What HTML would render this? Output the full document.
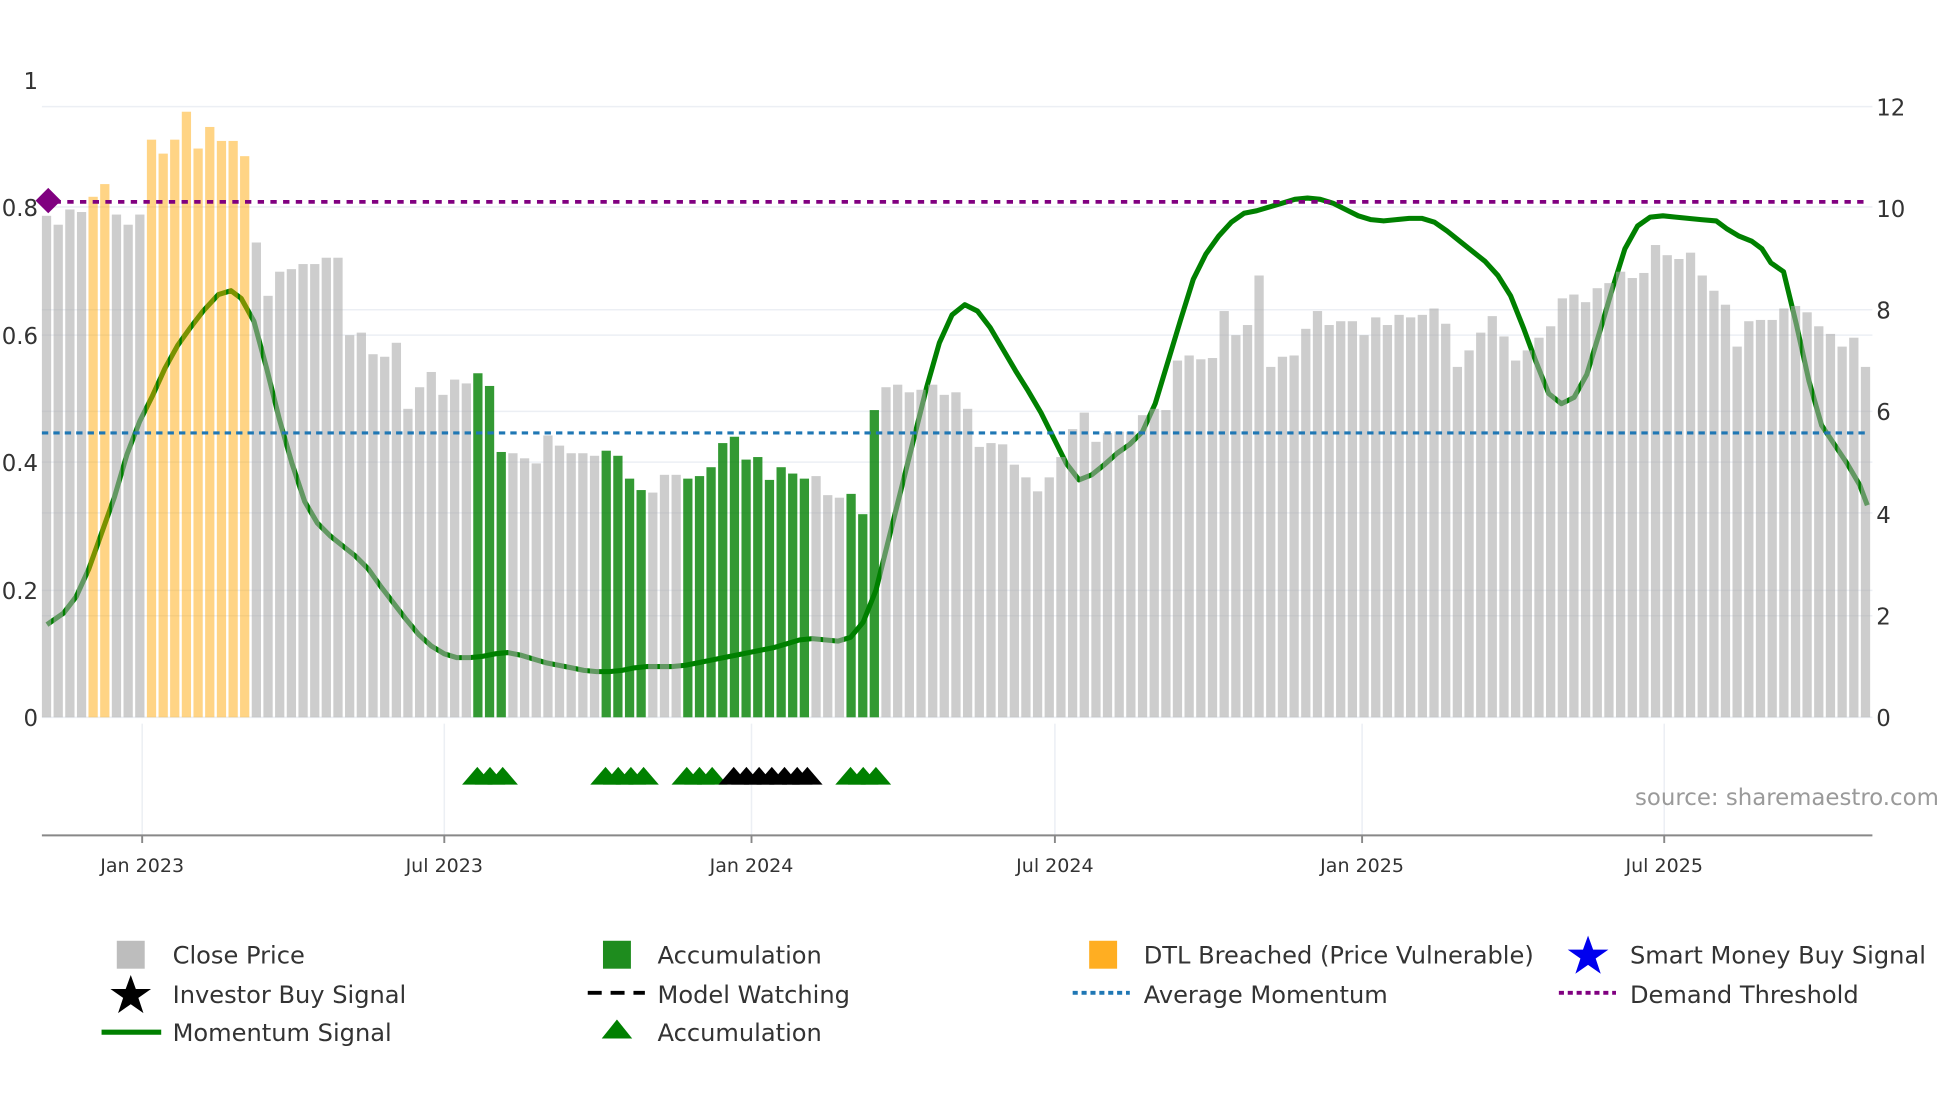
<!DOCTYPE html>
<html><head><meta charset="utf-8"><style>
html,body{margin:0;padding:0;background:#fff;width:1960px;height:1102px;overflow:hidden}
svg{display:block}
text{font-family:"DejaVu Sans","Liberation Sans",sans-serif;fill:#333}
.g{fill:#a8a8a8;fill-opacity:.58}
.o{fill:#ffa500;fill-opacity:.48}
.a{fill:#008000;fill-opacity:.8}
</style></head><body>
<svg width="1960" height="1102" viewBox="0 0 1544 868" preserveAspectRatio="none" xmlns="http://www.w3.org/2000/svg">
<g stroke="#eceff4" stroke-width="1.2">
<line x1="33" y1="84" x2="1475" y2="84"/><line x1="33" y1="163" x2="1475" y2="163"/>
<line x1="33" y1="244" x2="1475" y2="244"/><line x1="33" y1="264" x2="1475" y2="264"/>
<line x1="33" y1="324" x2="1475" y2="324"/><line x1="33" y1="364" x2="1475" y2="364"/>
<line x1="33" y1="404" x2="1475" y2="404"/><line x1="33" y1="465" x2="1475" y2="465"/>
<line x1="33" y1="485" x2="1475" y2="485"/><line x1="33" y1="565" x2="1475" y2="565"/>
<line x1="112" y1="570" x2="112" y2="658"/><line x1="350" y1="570" x2="350" y2="658"/>
<line x1="592" y1="570" x2="592" y2="658"/><line x1="831" y1="570" x2="831" y2="658"/>
<line x1="1073" y1="570" x2="1073" y2="658"/><line x1="1311" y1="570" x2="1311" y2="658"/>
</g>
<polyline fill="none" stroke="#008000" stroke-width="4" stroke-linejoin="round" points="37,492 50,483 60,470 70,448 80,420 90,392 100,358 110,332 120,312 130,290 140,272 150,258 160,245 172,232 182,229 190,235 200,253 210,290 220,330 230,365 240,395 250,412 260,422 270,430 280,438 290,448 300,462 310,475 320,488 330,500 340,509 350,515 360,518 370,518 380,517 390,515 400,514 410,516 420,519 430,522 440,524 450,526 460,528 470,529 480,529 490,528 500,526 510,525 520,525 530,525 540,524 550,522 560,520 570,518 580,516 590,514 600,512 610,510 620,507 630,504 640,503 650,504 660,505 670,502 680,490 690,465 700,425 710,385 720,345 730,305 740,270 750,248 760,240 770,245 780,258 790,275 800,292 810,308 820,325 830,345 840,365 850,378 860,374 870,366 880,357 890,350 900,340 910,318 920,285 930,252 940,220 950,200 960,186 970,175 980,168 990,166 1000,163 1010,160 1020,157 1030,156 1040,157 1050,160 1060,165 1070,170 1080,173 1090,174 1100,173 1110,172 1120,172 1130,175 1140,182 1150,190 1160,198 1170,206 1180,217 1190,233 1200,258 1210,285 1220,310 1230,318 1240,313 1250,295 1260,262 1270,228 1280,196 1290,178 1300,171 1310,170 1320,171 1330,172 1340,173 1352,174 1360,180 1370,186 1380,190 1388,196 1395,207 1405,214 1415,255 1425,300 1435,335 1445,350 1455,365 1465,382 1471,398"/>
<g>
<rect class="g" x="33.0" y="170" width="7.3" height="395"/>
<rect class="g" x="42.2" y="177" width="7.3" height="388"/>
<rect class="g" x="51.4" y="165" width="7.3" height="400"/>
<rect class="g" x="60.6" y="167" width="7.3" height="398"/>
<rect class="o" x="69.7" y="155" width="7.3" height="410"/>
<rect class="o" x="78.9" y="145" width="7.3" height="420"/>
<rect class="g" x="88.1" y="169" width="7.3" height="396"/>
<rect class="g" x="97.3" y="177" width="7.3" height="388"/>
<rect class="g" x="106.5" y="169" width="7.3" height="396"/>
<rect class="o" x="115.7" y="110" width="7.3" height="455"/>
<rect class="o" x="124.9" y="121" width="7.3" height="444"/>
<rect class="o" x="134.0" y="110" width="7.3" height="455"/>
<rect class="o" x="143.2" y="88" width="7.3" height="477"/>
<rect class="o" x="152.4" y="117" width="7.3" height="448"/>
<rect class="o" x="161.6" y="100" width="7.3" height="465"/>
<rect class="o" x="170.8" y="111" width="7.3" height="454"/>
<rect class="o" x="180.0" y="111" width="7.3" height="454"/>
<rect class="o" x="189.1" y="123" width="7.3" height="442"/>
<rect class="g" x="198.3" y="191" width="7.3" height="374"/>
<rect class="g" x="207.5" y="233" width="7.3" height="332"/>
<rect class="g" x="216.7" y="214" width="7.3" height="351"/>
<rect class="g" x="225.9" y="212" width="7.3" height="353"/>
<rect class="g" x="235.1" y="208" width="7.3" height="357"/>
<rect class="g" x="244.3" y="208" width="7.3" height="357"/>
<rect class="g" x="253.4" y="203" width="7.3" height="362"/>
<rect class="g" x="262.6" y="203" width="7.3" height="362"/>
<rect class="g" x="271.8" y="264" width="7.3" height="301"/>
<rect class="g" x="281.0" y="262" width="7.3" height="303"/>
<rect class="g" x="290.2" y="279" width="7.3" height="286"/>
<rect class="g" x="299.4" y="281" width="7.3" height="284"/>
<rect class="g" x="308.6" y="270" width="7.3" height="295"/>
<rect class="g" x="317.7" y="322" width="7.3" height="243"/>
<rect class="g" x="326.9" y="305" width="7.3" height="260"/>
<rect class="g" x="336.1" y="293" width="7.3" height="272"/>
<rect class="g" x="345.3" y="311" width="7.3" height="254"/>
<rect class="g" x="354.5" y="299" width="7.3" height="266"/>
<rect class="g" x="363.7" y="302" width="7.3" height="263"/>
<rect class="a" x="372.8" y="294" width="7.3" height="271"/>
<rect class="a" x="382.0" y="304" width="7.3" height="261"/>
<rect class="a" x="391.2" y="356" width="7.3" height="209"/>
<rect class="g" x="400.4" y="357" width="7.3" height="208"/>
<rect class="g" x="409.6" y="361" width="7.3" height="204"/>
<rect class="g" x="418.8" y="365" width="7.3" height="200"/>
<rect class="g" x="428.0" y="343" width="7.3" height="222"/>
<rect class="g" x="437.1" y="351" width="7.3" height="214"/>
<rect class="g" x="446.3" y="357" width="7.3" height="208"/>
<rect class="g" x="455.5" y="357" width="7.3" height="208"/>
<rect class="g" x="464.7" y="359" width="7.3" height="206"/>
<rect class="a" x="473.9" y="355" width="7.3" height="210"/>
<rect class="a" x="483.1" y="359" width="7.3" height="206"/>
<rect class="a" x="492.3" y="377" width="7.3" height="188"/>
<rect class="a" x="501.4" y="386" width="7.3" height="179"/>
<rect class="g" x="510.6" y="388" width="7.3" height="177"/>
<rect class="g" x="519.8" y="374" width="7.3" height="191"/>
<rect class="g" x="529.0" y="374" width="7.3" height="191"/>
<rect class="a" x="538.2" y="377" width="7.3" height="188"/>
<rect class="a" x="547.4" y="375" width="7.3" height="190"/>
<rect class="a" x="556.5" y="368" width="7.3" height="197"/>
<rect class="a" x="565.7" y="349" width="7.3" height="216"/>
<rect class="a" x="574.9" y="344" width="7.3" height="221"/>
<rect class="a" x="584.1" y="362" width="7.3" height="203"/>
<rect class="a" x="593.3" y="360" width="7.3" height="205"/>
<rect class="a" x="602.5" y="378" width="7.3" height="187"/>
<rect class="a" x="611.7" y="368" width="7.3" height="197"/>
<rect class="a" x="620.8" y="373" width="7.3" height="192"/>
<rect class="a" x="630.0" y="377" width="7.3" height="188"/>
<rect class="g" x="639.2" y="375" width="7.3" height="190"/>
<rect class="g" x="648.4" y="390" width="7.3" height="175"/>
<rect class="g" x="657.6" y="392" width="7.3" height="173"/>
<rect class="a" x="666.8" y="389" width="7.3" height="176"/>
<rect class="a" x="676.0" y="405" width="7.3" height="160"/>
<rect class="a" x="685.1" y="323" width="7.3" height="242"/>
<rect class="g" x="694.3" y="305" width="7.3" height="260"/>
<rect class="g" x="703.5" y="303" width="7.3" height="262"/>
<rect class="g" x="712.7" y="309" width="7.3" height="256"/>
<rect class="g" x="721.9" y="307" width="7.3" height="258"/>
<rect class="g" x="731.1" y="303" width="7.3" height="262"/>
<rect class="g" x="740.2" y="311" width="7.3" height="254"/>
<rect class="g" x="749.4" y="309" width="7.3" height="256"/>
<rect class="g" x="758.6" y="322" width="7.3" height="243"/>
<rect class="g" x="767.8" y="352" width="7.3" height="213"/>
<rect class="g" x="777.0" y="349" width="7.3" height="216"/>
<rect class="g" x="786.2" y="350" width="7.3" height="215"/>
<rect class="g" x="795.4" y="366" width="7.3" height="199"/>
<rect class="g" x="804.5" y="376" width="7.3" height="189"/>
<rect class="g" x="813.7" y="387" width="7.3" height="178"/>
<rect class="g" x="822.9" y="376" width="7.3" height="189"/>
<rect class="g" x="832.1" y="360" width="7.3" height="205"/>
<rect class="g" x="841.3" y="338" width="7.3" height="227"/>
<rect class="g" x="850.5" y="325" width="7.3" height="240"/>
<rect class="g" x="859.7" y="348" width="7.3" height="217"/>
<rect class="g" x="868.8" y="341" width="7.3" height="224"/>
<rect class="g" x="878.0" y="340" width="7.3" height="225"/>
<rect class="g" x="887.2" y="340" width="7.3" height="225"/>
<rect class="g" x="896.4" y="327" width="7.3" height="238"/>
<rect class="g" x="905.6" y="322" width="7.3" height="243"/>
<rect class="g" x="914.8" y="323" width="7.3" height="242"/>
<rect class="g" x="923.9" y="284" width="7.3" height="281"/>
<rect class="g" x="933.1" y="280" width="7.3" height="285"/>
<rect class="g" x="942.3" y="283" width="7.3" height="282"/>
<rect class="g" x="951.5" y="282" width="7.3" height="283"/>
<rect class="g" x="960.7" y="245" width="7.3" height="320"/>
<rect class="g" x="969.9" y="264" width="7.3" height="301"/>
<rect class="g" x="979.1" y="256" width="7.3" height="309"/>
<rect class="g" x="988.2" y="217" width="7.3" height="348"/>
<rect class="g" x="997.4" y="289" width="7.3" height="276"/>
<rect class="g" x="1006.6" y="281" width="7.3" height="284"/>
<rect class="g" x="1015.8" y="280" width="7.3" height="285"/>
<rect class="g" x="1025.0" y="259" width="7.3" height="306"/>
<rect class="g" x="1034.2" y="245" width="7.3" height="320"/>
<rect class="g" x="1043.4" y="256" width="7.3" height="309"/>
<rect class="g" x="1052.5" y="253" width="7.3" height="312"/>
<rect class="g" x="1061.7" y="253" width="7.3" height="312"/>
<rect class="g" x="1070.9" y="264" width="7.3" height="301"/>
<rect class="g" x="1080.1" y="250" width="7.3" height="315"/>
<rect class="g" x="1089.3" y="256" width="7.3" height="309"/>
<rect class="g" x="1098.5" y="248" width="7.3" height="317"/>
<rect class="g" x="1107.6" y="250" width="7.3" height="315"/>
<rect class="g" x="1116.8" y="248" width="7.3" height="317"/>
<rect class="g" x="1126.0" y="243" width="7.3" height="322"/>
<rect class="g" x="1135.2" y="255" width="7.3" height="310"/>
<rect class="g" x="1144.4" y="289" width="7.3" height="276"/>
<rect class="g" x="1153.6" y="276" width="7.3" height="289"/>
<rect class="g" x="1162.8" y="262" width="7.3" height="303"/>
<rect class="g" x="1171.9" y="249" width="7.3" height="316"/>
<rect class="g" x="1181.1" y="265" width="7.3" height="300"/>
<rect class="g" x="1190.3" y="284" width="7.3" height="281"/>
<rect class="g" x="1199.5" y="276" width="7.3" height="289"/>
<rect class="g" x="1208.7" y="266" width="7.3" height="299"/>
<rect class="g" x="1217.9" y="257" width="7.3" height="308"/>
<rect class="g" x="1227.1" y="235" width="7.3" height="330"/>
<rect class="g" x="1236.2" y="232" width="7.3" height="333"/>
<rect class="g" x="1245.4" y="238" width="7.3" height="327"/>
<rect class="g" x="1254.6" y="227" width="7.3" height="338"/>
<rect class="g" x="1263.8" y="223" width="7.3" height="342"/>
<rect class="g" x="1273.0" y="214" width="7.3" height="351"/>
<rect class="g" x="1282.2" y="219" width="7.3" height="346"/>
<rect class="g" x="1291.3" y="215" width="7.3" height="350"/>
<rect class="g" x="1300.5" y="193" width="7.3" height="372"/>
<rect class="g" x="1309.7" y="201" width="7.3" height="364"/>
<rect class="g" x="1318.9" y="204" width="7.3" height="361"/>
<rect class="g" x="1328.1" y="199" width="7.3" height="366"/>
<rect class="g" x="1337.3" y="217" width="7.3" height="348"/>
<rect class="g" x="1346.5" y="229" width="7.3" height="336"/>
<rect class="g" x="1355.6" y="240" width="7.3" height="325"/>
<rect class="g" x="1364.8" y="273" width="7.3" height="292"/>
<rect class="g" x="1374.0" y="253" width="7.3" height="312"/>
<rect class="g" x="1383.2" y="252" width="7.3" height="313"/>
<rect class="g" x="1392.4" y="252" width="7.3" height="313"/>
<rect class="g" x="1401.6" y="243" width="7.3" height="322"/>
<rect class="g" x="1410.8" y="241" width="7.3" height="324"/>
<rect class="g" x="1419.9" y="246" width="7.3" height="319"/>
<rect class="g" x="1429.1" y="257" width="7.3" height="308"/>
<rect class="g" x="1438.3" y="263" width="7.3" height="302"/>
<rect class="g" x="1447.5" y="273" width="7.3" height="292"/>
<rect class="g" x="1456.7" y="266" width="7.3" height="299"/>
<rect class="g" x="1465.9" y="289" width="7.3" height="276"/>
</g>
<line x1="33" y1="159" x2="1472" y2="159" stroke="#800080" stroke-width="3" stroke-dasharray="5,5"/>
<line x1="33" y1="341" x2="1472" y2="341" stroke="#1f77b4" stroke-width="2.5" stroke-dasharray="5,4"/>
<polygon points="38,148 48,158 38,168 28,158" fill="#800080"/>
<g fill="#008000">
<polygon points="364,618 376,604 388,618"/><polygon points="374,618 386,604 398,618"/><polygon points="384,618 396,604 408,618"/>
<polygon points="465,618 477,604 489,618"/><polygon points="475,618 487,604 499,618"/><polygon points="485,618 497,604 509,618"/><polygon points="495,618 507,604 519,618"/>
<polygon points="529,618 541,604 553,618"/><polygon points="539,618 551,604 563,618"/><polygon points="549,618 561,604 573,618"/>
<polygon points="658,618 670,604 682,618"/><polygon points="668,618 680,604 692,618"/><polygon points="678,618 690,604 702,618"/>
</g>
<g fill="#000">
<polygon points="566,618 578,604 590,618"/><polygon points="576,618 588,604 600,618"/><polygon points="586,618 598,604 610,618"/><polygon points="596,618 608,604 620,618"/><polygon points="606,618 618,604 630,618"/><polygon points="616,618 628,604 640,618"/><polygon points="624,618 636,604 648,618"/>
</g>
<line x1="33" y1="658" x2="1475" y2="658" stroke="#888" stroke-width="1.5"/>
<g stroke="#888" stroke-width="1.5">
<line x1="112" y1="658" x2="112" y2="664"/><line x1="350" y1="658" x2="350" y2="664"/><line x1="592" y1="658" x2="592" y2="664"/><line x1="831" y1="658" x2="831" y2="664"/><line x1="1073" y1="658" x2="1073" y2="664"/><line x1="1311" y1="658" x2="1311" y2="664"/>
</g>
<g font-size="15" text-anchor="middle">
<text x="112" y="687">Jan 2023</text><text x="350" y="687">Jul 2023</text><text x="592" y="687">Jan 2024</text><text x="831" y="687">Jul 2024</text><text x="1073" y="687">Jan 2025</text><text x="1311" y="687">Jul 2025</text>
</g>
<g font-size="18" text-anchor="end">
<text x="30" y="70">1</text><text x="30" y="170">0.8</text><text x="30" y="271">0.6</text><text x="30" y="371">0.4</text><text x="30" y="472">0.2</text><text x="30" y="572">0</text>
</g>
<g font-size="18" text-anchor="start">
<text x="1478" y="91">12</text><text x="1478" y="171">10</text><text x="1478" y="251">8</text><text x="1478" y="331">6</text><text x="1478" y="412">4</text><text x="1478" y="492">2</text><text x="1478" y="572">0</text>
</g>
<text x="1288" y="634" font-size="18" style="fill:#9a9a9a">source: sharemaestro.com</text>
<g font-size="19">
<rect x="92" y="741" width="22" height="22" fill="#bdbdbd"/><text x="136" y="759">Close Price</text>
<rect x="475" y="741" width="22" height="22" fill="#1e8c1e"/><text x="518" y="759">Accumulation</text>
<rect x="858" y="741" width="22" height="22" fill="#ffae22"/><text x="901" y="759">DTL Breached (Price Vulnerable)</text>
<polygon points="1251,737 1255,748 1267,748 1257,755 1261,767 1251,760 1241,767 1245,755 1235,748 1247,748" fill="#0000ee"/><text x="1284" y="759">Smart Money Buy Signal</text>
<polygon points="103,768 107,779 119,779 109,786 113,798 103,791 93,798 97,786 87,779 99,779" fill="#000"/><text x="136" y="790">Investor Buy Signal</text>
<line x1="463" y1="782" x2="508" y2="782" stroke="#000" stroke-width="3" stroke-dasharray="11,7"/><text x="518" y="790">Model Watching</text>
<line x1="845" y1="782" x2="890" y2="782" stroke="#1f77b4" stroke-width="3" stroke-dasharray="4,3"/><text x="901" y="790">Average Momentum</text>
<line x1="1228" y1="782" x2="1273" y2="782" stroke="#800080" stroke-width="3" stroke-dasharray="4,3"/><text x="1284" y="790">Demand Threshold</text>
<line x1="80" y1="813" x2="127" y2="813" stroke="#008000" stroke-width="4"/><text x="136" y="820">Momentum Signal</text>
<polygon points="474,818 486,803 498,818" fill="#008000"/><text x="518" y="820">Accumulation</text>
</g>
</svg>
</body></html>
